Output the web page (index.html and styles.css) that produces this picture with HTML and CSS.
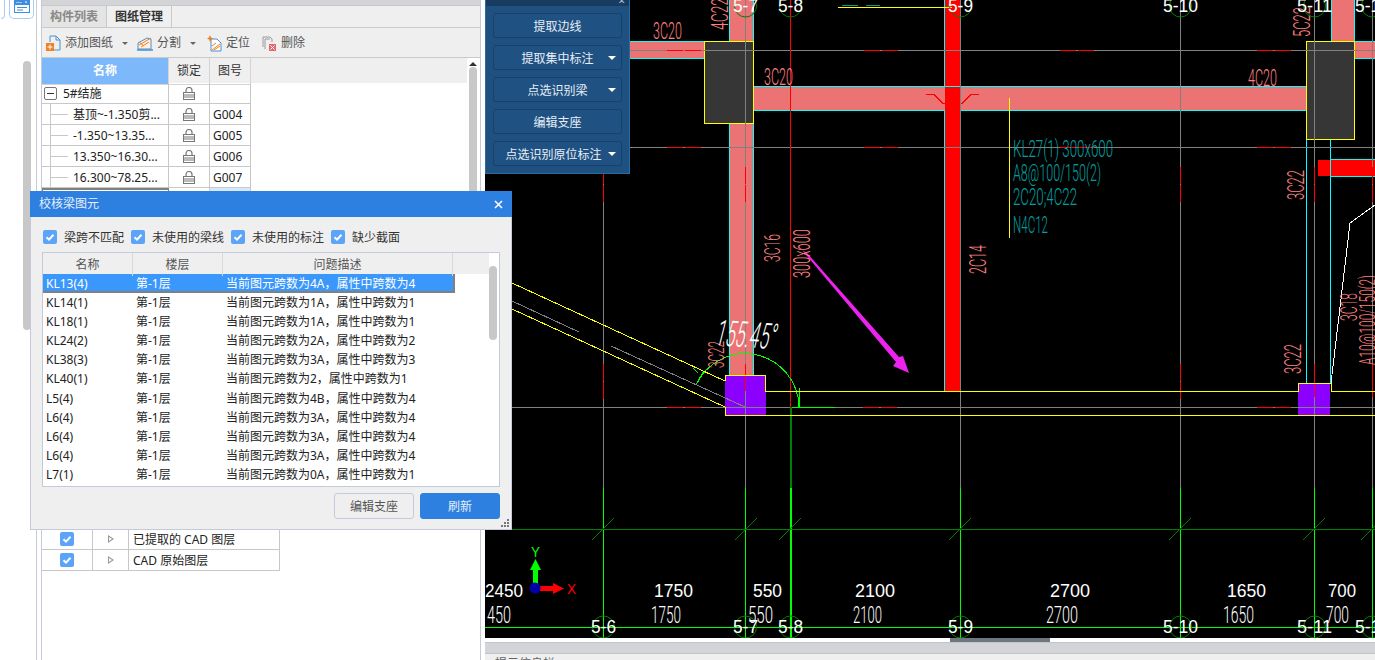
FILE: index.html
```html
<!DOCTYPE html>
<html lang="zh-CN">
<head>
  <meta charset="UTF-8" />
  <meta name="viewport" content="width=device-width, initial-scale=1.0"/>
  <title>校核梁图元</title>
  <link rel="stylesheet" href="styles.css">
</head>
<body>
  <svg class="defs" width="0" height="0">
    <symbol id="lock" viewBox="0 0 12 13">
      <path d="M3 6V3.5a3 3 0 0 1 6 0V6" fill="none" stroke="#777" stroke-width="1.2"/>
      <rect x="0.5" y="5.5" width="11" height="7" fill="#fff" stroke="#777"/>
      <path d="M1 8h10M1 10h10" stroke="#777"/>
    </symbol>
    <symbol id="tick" viewBox="0 0 14 14">
      <rect width="14" height="14" rx="2" fill="#5ba4f8"/>
      <path d="M3.5 7.2 6 9.6 10.5 4.8" fill="none" stroke="#fff" stroke-width="2"/>
    </symbol>
  </svg>

  <div class="app">
    <div class="rail">
      <div class="rail-tabs">
        <div class="rail-tab rail-tab-cut"></div>
        <div class="rail-tab">
          <svg width="16" height="13" viewBox="0 0 16 13">
            <rect x="0.5" y="0.5" width="15" height="12" fill="#fff" stroke="#3d8ee0"/>
            <rect x="1" y="1" width="14" height="4" fill="#3d8ee0"/>
            <path d="M3 2v1M5 2v1M7 2v1M11 2h2" stroke="#fff"/>
            <path d="M3 7.500h10M3 10h6" stroke="#3d8ee0"/>
          </svg>
        </div>
      </div>
      <div class="rail-scroll"></div>
    </div>

    <div class="panel">
      <div class="panel-strip"></div>
      <div class="tabs">
        <div class="tab">构件列表</div>
        <div class="tab tab-active">图纸管理</div>
      </div>
      <div class="toolbar">
        <div class="tool tool-add">
          <svg width="15" height="16" viewBox="0 0 15 16">
            <path d="M4 1h6l4 4v10H8M4 1v6" fill="none" stroke="#4a8fd0"/>
            <path d="M10 1v4h4" fill="none" stroke="#4a8fd0"/>
            <rect x="0" y="8" width="8" height="8" fill="#f08020"/>
            <path d="M4 9.5v5M1.5 12h5" stroke="#fff"/>
          </svg>
          <span>添加图纸</span><i class="caret"></i>
        </div>
        <div class="tool tool-split">
          <svg width="16" height="15" viewBox="0 0 16 15">
            <path d="M1 13V7l9-5 4 1v10z" fill="#fdf0e0" stroke="#4a8fd0"/>
            <path d="M2 9 14 2M4 11l8-5M2 6l5 4" stroke="#f08020"/>
            <path d="M0 14h16" stroke="#4a8fd0" stroke-width="1.5"/>
          </svg>
          <span>分割</span><i class="caret"></i>
        </div>
        <div class="tool tool-locate">
          <svg width="15" height="17" viewBox="0 0 15 17">
            <path d="M4 4h6l4 4v8H4z" fill="#fff" stroke="#4a8fd0"/>
            <path d="M5 15l8-6M7 15l6-4M5 11l4-3" stroke="#f08020"/>
            <path d="M3 0l1 2.500 2.500 1-2.500 1-1 2.500-1-2.500L0 3.500l2-1z" fill="#f08020"/>
          </svg>
          <span>定位</span>
        </div>
        <div class="tool tool-delete">
          <svg width="14" height="15" viewBox="0 0 14 15">
            <path d="M1 11V1h7l2 2v3" fill="none" stroke="#999"/>
            <path d="M3 13V3h5" fill="none" stroke="#999"/>
            <rect x="7" y="8" width="7" height="7" fill="#e06a6a"/>
            <path d="M8.500 9.500l4 4m0-4l-4 4" stroke="#fff"/>
          </svg>
          <span>删除</span>
        </div>
      </div>

      <div class="panel-body">
        <div class="panel-content">
          <div class="head-row">
            <div class="head-cell head-name">名称</div>
            <div class="head-cell">锁定</div>
            <div class="head-cell">图号</div>
          </div>
          <div class="draw-row">
            <div class="draw-cell draw-root"><i class="minus"></i>5#结施</div>
            <div class="draw-cell draw-lock"><svg width="12" height="13"><use href="#lock"/></svg></div>
            <div class="draw-cell"></div>
          </div>
          <div class="draw-row">
            <div class="draw-cell"><i class="branch"></i>基顶~-1.350剪...</div>
            <div class="draw-cell draw-lock"><svg width="12" height="13"><use href="#lock"/></svg></div>
            <div class="draw-cell">G004</div>
          </div>
          <div class="draw-row">
            <div class="draw-cell"><i class="branch"></i>-1.350~13.35...</div>
            <div class="draw-cell draw-lock"><svg width="12" height="13"><use href="#lock"/></svg></div>
            <div class="draw-cell">G005</div>
          </div>
          <div class="draw-row">
            <div class="draw-cell"><i class="branch"></i>13.350~16.30...</div>
            <div class="draw-cell draw-lock"><svg width="12" height="13"><use href="#lock"/></svg></div>
            <div class="draw-cell">G006</div>
          </div>
          <div class="draw-row">
            <div class="draw-cell"><i class="branch"></i>16.300~78.25...</div>
            <div class="draw-cell draw-lock"><svg width="12" height="13"><use href="#lock"/></svg></div>
            <div class="draw-cell">G007</div>
          </div>
          <div class="draw-row draw-row-current">
            <div class="draw-cell"></div>
            <div class="draw-cell"></div>
            <div class="draw-cell"></div>
          </div>

          <div class="layers">
            <div class="layer-row">
              <div class="layer-cell layer-check"><svg width="14" height="14"><use href="#tick"/></svg></div>
              <div class="layer-cell layer-arrow"><i class="tri"></i></div>
              <div class="layer-cell">已提取的 CAD 图层</div>
            </div>
            <div class="layer-row">
              <div class="layer-cell layer-check"><svg width="14" height="14"><use href="#tick"/></svg></div>
              <div class="layer-cell layer-arrow"><i class="tri"></i></div>
              <div class="layer-cell">CAD 原始图层</div>
            </div>
          </div>
        </div>
        <div class="panel-scroll">
          <i class="scroll-up"></i>
          <div class="panel-thumb"></div>
        </div>
      </div>
    </div>

    <div class="workspace">
      <svg class="cad" width="890" height="638" viewBox="485 0 890 638">
        <!-- beams -->
        <g class="crisp">
          <rect x="630" y="41" width="74" height="17" class="beam"/>
          <rect x="729" y="0" width="25" height="376" class="beam"/>
          <rect x="754" y="86" width="552" height="25" class="beam"/>
          <rect x="1331" y="0" width="23" height="41" class="beam"/>
          <rect x="1355" y="41" width="20" height="17" class="beam"/>
          <rect x="945" y="0" width="15" height="391" fill="#ff0000"/>
          <rect x="1318" y="160" width="57" height="16" fill="#ff0000"/>
          <path class="cyan" d="M630 41.500h74M630 58.500h74M729.500 0v41M753.500 0v41M729.500 123v253M753.500 123v253M754 86.500h552M754 110.500h191M960 110.500h346M944.500 0v86M944.500 110v281M960.500 0v86M960.500 167v34M1331.500 0v41M1354.500 0v41M1355 41.500h20M1355 58.500h20M1306.500 139v244M1330.500 139v244M1331 159.500h44M1331 176.500h44"/>
          <rect x="704.500" y="41.500" width="49" height="82" fill="#363636" stroke="#ffff00"/>
          <rect x="1306.500" y="41.500" width="48" height="98" fill="#363636" stroke="#ffff00"/>
          <path d="M926 94.500h8l9 9h19l9-9h8" fill="none" stroke="#ff0000"/>
        </g>

        <!-- axis lines -->
        <g class="crisp">
          <path class="grey" d="M630 50.500h745M630 147.500h745M512 407.500h863M603.500 0v488M745.500 0v488M960.500 0v488M1180.500 0v488M1314.500 0v488M1372.500 0v488"/>
          <path class="red" d="M790.500 0v407M667 50.500h16M685 50.500h16M864 50.500h16M882 50.500h16M1060 50.500h16M1078 50.500h16M1257 50.500h16M1275 50.500h16M667 147.500h16M685 147.500h16M864 147.500h16M882 147.500h16M1060 147.500h16M1078 147.500h16M1257 147.500h16M1275 147.500h16M667 407.500h16M685 407.500h16M863 407.500h16M881 407.500h16M1257 407.500h16M1275 407.500h16M603.500 167v17M603.500 185v17M603.500 364v17M603.500 382v17M745.500 167v17M745.500 185v17M745.500 364v12M1180.500 167v17M1180.500 185v17M1180.500 364v17M1180.500 382v17M1314.500 167v17M1314.500 185v17M1314.500 364v33M1372.500 167v17M1372.500 185v17M1372.500 364v33"/>
          <path class="bright" d="M603.500 488V638M745.500 488V638M790.500 488V638M791.500 488V638M960.500 488V638M1180.500 488V638M1314.500 488V638M1372.500 488V638M485 627.500h890M790 407.500h45M799.500 388v19"/>
          <path class="dark" d="M790.500 407v81M791.500 407v81M485 529.500h890M592 540l22-22M735 540l22-22M779 540l22-22M949 540l22-22M1169 540l22-22M1303 540l22-22M1361 540l14-14"/>
          <path d="M799 407A54 54 0 0 0 696 385" fill="none" stroke="#00ff00"/>
          <path d="M703 372l-7 13M693 368l5 5" fill="none" stroke="#00ff00" class="thin"/>
        </g>

        <!-- columns and outlines -->
        <g class="crisp">
          <rect x="725" y="376" width="41" height="39" fill="#8b00ff"/>
          <rect x="1298" y="383" width="32" height="32" fill="#8b00ff"/>
          <path class="grey" d="M725 407.500h41M745.500 376v39M1298 407.500h32M1314.500 383v32"/>
          <path class="red" d="M745.500 364v27M1314.500 383v14"/>
          <path class="yellow" d="M725.500 381V375.500H765.500V391.500H1298.500V383.500H1331.500V391.500H1375M725.500 407V415.500H1375M512 283 725 381M512 309 725 407M838 7.500h114M1009.500 98v140"/>
          <path d="M512 301 579 332M611 346 745 407" fill="none" stroke="#808080"/>
          <path d="M1331 383 1350 223 1375 205" fill="none" stroke="#ffffff"/>
          <path d="M842 5.500h16M866 5.500h14" fill="none" stroke="#009a9a"/>
        </g>
        <polygon points="802,250 807,253 899,357 903,356 909,373 893,366 896,362" fill="#ee22ee"/>

        <!-- salmon rebar notes -->
        <g class="note">
          <text x="653" y="39" font-size="23" textLength="29" lengthAdjust="spacingAndGlyphs">3C20</text>
          <text x="764" y="85" font-size="23" textLength="29" lengthAdjust="spacingAndGlyphs">3C20</text>
          <text x="1248" y="86" font-size="23" textLength="29" lengthAdjust="spacingAndGlyphs">4C20</text>
          <text transform="translate(728 30) rotate(-90)" font-size="23" textLength="32" lengthAdjust="spacingAndGlyphs">4C22</text>
          <text transform="translate(1310 37) rotate(-90)" font-size="23" textLength="30" lengthAdjust="spacingAndGlyphs">5C22</text>
          <text transform="translate(1304 200) rotate(-90)" font-size="23" textLength="30" lengthAdjust="spacingAndGlyphs">3C22</text>
          <text transform="translate(780 262) rotate(-90)" font-size="22" textLength="28" lengthAdjust="spacingAndGlyphs">3C16</text>
          <text transform="translate(810 278) rotate(-90)" font-size="23" textLength="49" lengthAdjust="spacingAndGlyphs">300x600</text>
          <text transform="translate(986 274) rotate(-90)" font-size="23" textLength="29" lengthAdjust="spacingAndGlyphs">2C14</text>
          <text transform="translate(724 368) rotate(-90)" font-size="22" textLength="27" lengthAdjust="spacingAndGlyphs">3C22</text>
          <text transform="translate(1301 374) rotate(-90)" font-size="23" textLength="30" lengthAdjust="spacingAndGlyphs">3C22</text>
          <text transform="translate(1357 321) rotate(-90)" font-size="23" textLength="28" lengthAdjust="spacingAndGlyphs">3C18</text>
          <text transform="translate(1375 365) rotate(-90)" font-size="22" textLength="90" lengthAdjust="spacingAndGlyphs">A10@100/150(2)</text>
        </g>

        <!-- teal beam label -->
        <g class="label">
          <text x="1013" y="157" font-size="23" textLength="100" lengthAdjust="spacingAndGlyphs">KL27(1) 300x600</text>
          <text x="1013" y="181" font-size="23" textLength="88" lengthAdjust="spacingAndGlyphs">A8@100/150(2)</text>
          <text x="1013" y="205" font-size="23" textLength="64" lengthAdjust="spacingAndGlyphs">2C20;4C22</text>
          <text x="1013" y="233" font-size="23" textLength="35" lengthAdjust="spacingAndGlyphs">N4C12</text>
        </g>

        <text class="angle" transform="translate(714 345) rotate(4) skewX(-10)" font-size="36" textLength="60" lengthAdjust="spacingAndGlyphs">155.45°</text>

        <!-- axis bubbles -->
        <g class="bubbles">
          <circle cx="745.500" cy="6" r="11"/><circle cx="790.500" cy="6" r="11"/><circle cx="960.500" cy="6" r="11"/><circle cx="1180.500" cy="6" r="11"/><circle cx="1314.500" cy="6" r="11"/><circle cx="1372.500" cy="6" r="11"/>
          <circle cx="603.500" cy="627" r="11"/><circle cx="745.500" cy="627" r="11"/><circle cx="790.500" cy="627" r="11"/><circle cx="960.500" cy="627" r="11"/><circle cx="1180.500" cy="627" r="11"/><circle cx="1314.500" cy="627" r="11"/><circle cx="1372.500" cy="627" r="11"/>
        </g>
        <g class="axis-text">
          <text x="733" y="12" textLength="25" lengthAdjust="spacingAndGlyphs">5-7</text>
          <text x="778" y="12" textLength="25" lengthAdjust="spacingAndGlyphs">5-8</text>
          <text x="948" y="12" textLength="25" lengthAdjust="spacingAndGlyphs">5-9</text>
          <text x="1163" y="12" textLength="35" lengthAdjust="spacingAndGlyphs">5-10</text>
          <text x="1297" y="12" textLength="35" lengthAdjust="spacingAndGlyphs">5-11</text>
          <text x="1355" y="12" textLength="35" lengthAdjust="spacingAndGlyphs">5-12</text>
          <text x="591" y="633" textLength="25" lengthAdjust="spacingAndGlyphs">5-6</text>
          <text x="733" y="633" textLength="25" lengthAdjust="spacingAndGlyphs">5-7</text>
          <text x="778" y="633" textLength="25" lengthAdjust="spacingAndGlyphs">5-8</text>
          <text x="948" y="633" textLength="25" lengthAdjust="spacingAndGlyphs">5-9</text>
          <text x="1163" y="633" textLength="35" lengthAdjust="spacingAndGlyphs">5-10</text>
          <text x="1297" y="633" textLength="35" lengthAdjust="spacingAndGlyphs">5-11</text>
          <text x="1355" y="633" textLength="35" lengthAdjust="spacingAndGlyphs">5-12</text>
        </g>

        <!-- dimensions -->
        <g class="dim-top">
          <text x="485" y="597" textLength="38" lengthAdjust="spacingAndGlyphs">2450</text>
          <text x="654" y="597" textLength="39" lengthAdjust="spacingAndGlyphs">1750</text>
          <text x="753" y="597" textLength="29" lengthAdjust="spacingAndGlyphs">550</text>
          <text x="855" y="597" textLength="40" lengthAdjust="spacingAndGlyphs">2100</text>
          <text x="1050" y="597" textLength="40" lengthAdjust="spacingAndGlyphs">2700</text>
          <text x="1227" y="597" textLength="39" lengthAdjust="spacingAndGlyphs">1650</text>
          <text x="1328" y="597" textLength="28" lengthAdjust="spacingAndGlyphs">700</text>
        </g>
        <g class="dim-low">
          <text x="487" y="623" textLength="24" lengthAdjust="spacingAndGlyphs">450</text>
          <text x="651" y="623" textLength="30" lengthAdjust="spacingAndGlyphs">1750</text>
          <text x="748" y="623" textLength="25" lengthAdjust="spacingAndGlyphs">550</text>
          <text x="853" y="623" textLength="29" lengthAdjust="spacingAndGlyphs">2100</text>
          <text x="1046" y="623" textLength="32" lengthAdjust="spacingAndGlyphs">2700</text>
          <text x="1223" y="623" textLength="31" lengthAdjust="spacingAndGlyphs">1650</text>
          <text x="1326" y="623" textLength="23" lengthAdjust="spacingAndGlyphs">700</text>
        </g>

        <!-- origin gizmo -->
        <rect x="533" y="568" width="5" height="18" fill="#00ff00"/>
        <polygon points="535.500,559 530,570 541,570" fill="#00ff00"/>
        <rect x="540" y="586" width="16" height="5" fill="#ff0000"/>
        <polygon points="564,588.500 553,583 553,594" fill="#ff0000"/>
        <circle cx="535" cy="588" r="5.500" fill="#0000aa"/>
        <text x="531" y="557" class="gizmo-y" font-size="14" textLength="9" lengthAdjust="spacingAndGlyphs">Y</text>
        <text x="567" y="594" class="gizmo-x" font-size="15" textLength="9" lengthAdjust="spacingAndGlyphs">X</text>
      </svg>

      <div class="float-panel">
        <div class="float-title"><span class="float-close">×</span></div>
        <div class="float-btn">提取边线</div>
        <div class="float-btn float-more">提取集中标注</div>
        <div class="float-btn float-more">点选识别梁</div>
        <div class="float-btn">编辑支座</div>
        <div class="float-btn float-more float-long">点选识别原位标注</div>
      </div>

      <div class="hsplit"><div class="hsplit-grip"></div></div>
      <div class="status-bar"></div>
      <div class="status-text">提示信息栏</div>
    </div>
  </div>

  <div class="dialog">
    <div class="dialog-title">
      <span>校核梁图元</span>
      <svg width="9" height="9" viewBox="0 0 9 9"><path d="M1 1l7 7m0-7l-7 7" stroke="#fff" stroke-width="1.500"/></svg>
    </div>
    <div class="dialog-options">
      <label class="option"><svg width="14" height="14"><use href="#tick"/></svg><span class="option-text">梁跨不匹配</span></label>
      <label class="option"><svg width="14" height="14"><use href="#tick"/></svg><span class="option-text">未使用的梁线</span></label>
      <label class="option"><svg width="14" height="14"><use href="#tick"/></svg><span class="option-text">未使用的标注</span></label>
      <label class="option"><svg width="14" height="14"><use href="#tick"/></svg><span class="option-text">缺少截面</span></label>
    </div>
    <div class="issues">
      <div class="issues-main">
        <div class="issues-head">
          <div class="issues-col">名称</div>
          <div class="issues-col">楼层</div>
          <div class="issues-col issues-col-wide">问题描述</div>
        </div>
        <div class="issue issue-selected"><span>KL13(4)</span><span>第-1层</span><span>当前图元跨数为4A，属性中跨数为4</span></div>
        <div class="issue"><span>KL14(1)</span><span>第-1层</span><span>当前图元跨数为1A，属性中跨数为1</span></div>
        <div class="issue"><span>KL18(1)</span><span>第-1层</span><span>当前图元跨数为1A，属性中跨数为1</span></div>
        <div class="issue"><span>KL24(2)</span><span>第-1层</span><span>当前图元跨数为2A，属性中跨数为2</span></div>
        <div class="issue"><span>KL38(3)</span><span>第-1层</span><span>当前图元跨数为3A，属性中跨数为3</span></div>
        <div class="issue"><span>KL40(1)</span><span>第-1层</span><span>当前图元跨数为2，属性中跨数为1</span></div>
        <div class="issue"><span>L5(4)</span><span>第-1层</span><span>当前图元跨数为4B，属性中跨数为4</span></div>
        <div class="issue"><span>L6(4)</span><span>第-1层</span><span>当前图元跨数为3A，属性中跨数为4</span></div>
        <div class="issue"><span>L6(4)</span><span>第-1层</span><span>当前图元跨数为3A，属性中跨数为4</span></div>
        <div class="issue"><span>L6(4)</span><span>第-1层</span><span>当前图元跨数为3A，属性中跨数为4</span></div>
        <div class="issue"><span>L7(1)</span><span>第-1层</span><span>当前图元跨数为0A，属性中跨数为1</span></div>
      </div>
      <div class="issues-scroll"><div class="issues-thumb"></div></div>
    </div>
    <div class="dialog-actions">
      <button class="btn">编辑支座</button>
      <button class="btn btn-primary">刷新</button>
    </div>
    <svg class="grip" width="9" height="9" viewBox="0 0 9 9">
      <path d="M6 0h2v2H6zM3 3h2v2H3zM6 3h2v2H6zM0 6h2v2H0zM3 6h2v2H3zM6 6h2v2H6z" fill="#777"/>
    </svg>
  </div>
</body>
</html>
```

FILE: styles.css
```css
* {
  box-sizing: border-box;
}

body {
  margin: 0;
  width: 1375px;
  height: 660px;
  overflow: hidden;
  background: white;
  color: #333;
  font-family: "Noto Sans", "Noto Sans CJK SC", sans-serif;
  font-size: 12px;
  line-height: 16px;
}

.defs {
  display: block;
  height: 0;
}

.app {
  display: flex;
  height: 660px;
}

/* left rail */
.rail {
  width: 37px;
  flex: none;
  border-right: 1px solid #c9ccd2;
}

.rail-tabs {
  display: flex;
  gap: 4px;
  height: 19px;
  justify-content: flex-end;
  padding-right: 2px;
}

.rail-tab {
  width: 25px;
  height: 19px;
  border: 1px solid #a8cdf5;
  border-top: none;
  border-radius: 0 0 5px 5px;
  display: flex;
  justify-content: center;
}

.rail-tab-cut {
  width: 4px;
  border-left: none;
  border-radius: 0 0 4px 0;
}

.rail-scroll {
  width: 8px;
  height: 269px;
  margin: 42px 0 0 23px;
  background: #c8c8c8;
  border-radius: 4px;
}

/* drawing panel */
.panel {
  width: 440px;
  flex: none;
  margin-left: 4px;
  border-left: 1px solid #c5cad5;
  border-right: 1px solid #c5cad5;
  display: flex;
  flex-direction: column;
}

.panel-strip {
  height: 5px;
  background: #d3d4d8;
}

.tabs {
  display: flex;
  height: 23px;
  background: #efefef;
  border-top: 1px solid #c9c9c9;
  border-bottom: 1px solid #c9c9c9;
}

.tab {
  width: 65px;
  padding-left: 8px;
  line-height: 22px;
  color: #888;
  font-weight: 700;
  background: #e4e4e4;
  border-right: 1px solid #c9c9c9;
}

.tab-active {
  width: 65px;
  color: #333;
  background: #efefef;
}

.toolbar {
  display: flex;
  align-items: center;
  height: 30px;
  padding: 1px 0 0 4px;
  background: #efefef;
  border-bottom: 1px solid #c9c9c9;
  color: #555;
}

.tool {
  display: flex;
  align-items: center;
  gap: 4px;
  margin-right: 12px;
}

.tool-add {
  margin-right: 9px;
}

.tool-split {
  margin-right: 11px;
}

.tool-locate {
  margin-right: 12px;
}

.tool-delete {
  gap: 5px;
}

.caret {
  width: 0;
  height: 0;
  margin-left: 5px;
  border-left: 3px solid transparent;
  border-right: 3px solid transparent;
  border-top: 3px solid #666;
}

.panel-body {
  flex: 1;
  display: flex;
}

.panel-content {
  width: 425px;
}

.head-row {
  display: grid;
  grid-template-columns: 127px 41px 41px;
  height: 25px;
  background: #efefef;
}

.head-cell {
  line-height: 26px;
  text-align: center;
  border-right: 1px solid #d4d4d4;
  border-bottom: 1px solid #d4d4d4;
}

.head-name {
  background: #7db8fb;
  color: white;
  font-weight: 700;
}

.draw-row {
  display: grid;
  grid-template-columns: 127px 41px 41px;
  height: 21px;
}

.draw-cell {
  display: flex;
  align-items: center;
  padding: 1px 0 0 3px;
  color: #222;
  border-right: 1px solid #c8c8c8;
  border-bottom: 1px solid #c8c8c8;
  white-space: nowrap;
}

.draw-lock {
  justify-content: center;
  padding: 0;
}

.draw-root {
  padding-left: 2px;
}

.minus {
  position: relative;
  width: 13px;
  height: 13px;
  margin-right: 6px;
  border: 1px solid #777;
  border-radius: 2px;
}

.minus::after {
  content: "";
  position: absolute;
  left: 2px;
  top: 5px;
  width: 7px;
  height: 1px;
  background: #333;
}

.branch {
  align-self: stretch;
  width: 18px;
  margin: -1px 5px 0 5px;
  border-left: 1px solid #c8c8c8;
  background: linear-gradient(#c8c8c8, #c8c8c8) no-repeat left center / 17px 1px;
}

.draw-row-current .draw-cell:first-child {
  border-top: 2px solid #808080;
  border-left: 1px solid #808080;
  border-right: 1px solid #808080;
}

.draw-row-current .draw-cell:last-child {
  background: #d5e8fc;
}

.layers {
  margin-top: 320px;
  width: 238px;
}

.layer-row {
  display: grid;
  grid-template-columns: 51px 36px 151px;
  height: 21px;
}

.layer-cell {
  display: flex;
  align-items: center;
  padding: 1px 0 0 4px;
  color: #222;
  border-right: 1px solid #c8c8c8;
  border-bottom: 1px solid #c8c8c8;
}

.layer-check,
.layer-arrow {
  justify-content: center;
  padding: 0;
}

.tri {
  position: relative;
  width: 0;
  height: 0;
  border-left: 6px solid #999;
  border-top: 4px solid transparent;
  border-bottom: 4px solid transparent;
}

.tri::after {
  content: "";
  position: absolute;
  left: -5px;
  top: -2px;
  width: 0;
  height: 0;
  border-left: 3px solid white;
  border-top: 2px solid transparent;
  border-bottom: 2px solid transparent;
}

.panel-scroll {
  width: 13px;
  padding-top: 4px;
  padding-left: 2px;
}

.scroll-up {
  display: block;
  width: 0;
  height: 0;
  border-left: 4px solid transparent;
  border-right: 4px solid transparent;
  border-bottom: 4px solid #333;
}

.panel-thumb {
  width: 8px;
  height: 300px;
  margin-top: 1px;
  background: #c8c8c8;
  border-radius: 4px;
}

/* cad canvas */
.workspace {
  position: relative;
  width: 890px;
  flex: none;
  margin-left: 4px;
}

.cad {
  display: block;
  background: black;
}

.crisp path,
.crisp rect {
  shape-rendering: crispEdges;
}

.beam {
  fill: #ec7373;
}

.cyan,
.grey,
.red,
.bright,
.dark,
.yellow {
  fill: none;
  stroke-width: 1;
}

.cyan {
  stroke: #00ffff;
}

.grey {
  stroke: #808080;
}

.red {
  stroke: #ff0000;
}

.bright {
  stroke: #00ff00;
}

.dark {
  stroke: #008000;
}

.yellow {
  stroke: #ffff00;
}

.bubbles circle {
  fill: none;
  stroke: #008000;
}

/* stroke-like cad lettering */
.note text,
.label text,
.dim-low text,
.angle {
  font-family: Roboto, "Liberation Sans", sans-serif;
  font-weight: 300;
}

.dim-top text,
.axis-text text,
.gizmo-x,
.gizmo-y {
  font-family: "Liberation Sans", sans-serif;
}

.note text {
  fill: #ff8080;
}

.label text {
  fill: #00a0a0;
}

.angle,
.dim-top text,
.dim-low text {
  fill: white;
}

.dim-top text {
  font-size: 18px;
}

.dim-low text {
  font-size: 23px;
}

.axis-text text {
  fill: white;
  font-size: 18px;
}

.gizmo-x {
  fill: #ff0000;
}

.gizmo-y {
  fill: #00ff00;
}

/* floating recognise panel */
.float-panel {
  position: absolute;
  left: 0;
  top: 0;
  width: 145px;
  height: 174px;
  padding: 0 7px;
  background: #1e5080;
  border: 1px solid #2a6aa0;
  border-top: none;
}

.float-title {
  height: 6px;
  margin: 0 -7px 7px;
  background: #183c60;
  position: relative;
}

.float-close {
  position: absolute;
  right: 4px;
  top: -5px;
  color: #b8c8d8;
  font-size: 12px;
  line-height: 12px;
}

.float-btn {
  position: relative;
  height: 25px;
  margin-bottom: 7px;
  line-height: 26px;
  text-align: center;
  color: #e8eef5;
  background: #1f5283;
  border: 1px solid #17406a;
  border-radius: 3px;
}

.float-long {
  padding-right: 8px;
}

.float-more::after {
  content: "";
  position: absolute;
  right: 5px;
  top: 10px;
  border-left: 4px solid transparent;
  border-right: 4px solid transparent;
  border-top: 4px solid white;
}

.hsplit {
  height: 4px;
  position: relative;
}

.hsplit-grip {
  position: absolute;
  left: 465px;
  top: 0;
  width: 100px;
  height: 4px;
  background: #6d7780;
}

.status-bar {
  height: 12px;
  background: #d3d4d8;
  border-top: 1px solid #c4c5c9;
  border-bottom: 1px solid #c4c5c9;
}

.status-text {
  height: 6px;
  padding: 2px 0 0 10px;
  overflow: hidden;
  background: #efefef;
  color: #666;
}

/* check dialog */
.dialog {
  position: absolute;
  left: 30px;
  top: 191px;
  width: 482px;
  height: 339px;
  background: #efefef;
  border: 1px solid #c5cad8;
  border-top: none;
}

.dialog-title {
  display: flex;
  justify-content: space-between;
  align-items: center;
  height: 26px;
  margin: 0 -1px;
  padding: 0 9px;
  background: #2d7fe0;
  color: #e6f0fb;
}

.dialog-options {
  display: flex;
  gap: 7px;
  padding: 13px 0 0 12px;
  height: 35px;
}

.option {
  display: flex;
  align-items: center;
  gap: 7px;
  height: 14px;
}

.option-text {
  padding-top: 2px;
}

.issues {
  display: flex;
  width: 458px;
  height: 235px;
  margin-left: 11px;
  background: white;
  border: 1px solid #c5cad8;
}

.issues-main {
  width: 446px;
  flex: none;
}

.issues-head {
  display: grid;
  grid-template-columns: 90px 90px 230px 36px;
  height: 21px;
  background: #efefef;
}

.issues-col {
  line-height: 23px;
  text-align: center;
  color: #555;
  border-right: 1px solid #d8d8de;
}

.issue {
  display: grid;
  grid-template-columns: 90px 90px 230px;
  height: 19.100px;
  line-height: 20px;
  color: #222;
  white-space: nowrap;
}

.issue span {
  padding-left: 3px;
}

.issue-selected {
  width: 412px;
  background: #3a97fb;
  color: white;
  border-right: 2px solid #808080;
  border-bottom: 2px solid #808080;
}

.issues-scroll {
  flex: 1;
  padding-top: 13px;
}

.issues-thumb {
  width: 8px;
  height: 74px;
  background: #c8c8c8;
  border-radius: 4px;
}

.dialog-actions {
  display: flex;
  justify-content: flex-end;
  gap: 6px;
  padding: 6px 11px 0 0;
}

.btn {
  width: 80px;
  height: 26px;
  padding: 2px 0 0;
  font: inherit;
  color: #555;
  background: #efefef;
  border: 1px solid #c5cad8;
  border-radius: 3px;
}

.btn-primary {
  color: #e6f0fb;
  background: #2d7fe0;
  border-color: #2d7fe0;
}

.grip {
  position: absolute;
  right: 1px;
  bottom: 1px;
}
```
